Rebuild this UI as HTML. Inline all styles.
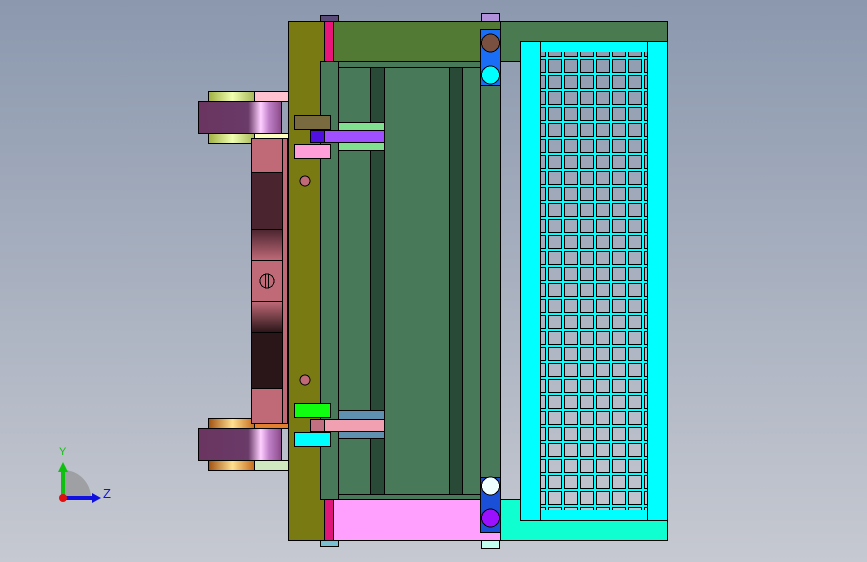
<!DOCTYPE html>
<html><head><meta charset="utf-8"><style>html,body{margin:0;padding:0;width:867px;height:562px;overflow:hidden}svg{display:block}</style></head><body>
<svg width="867" height="562" viewBox="0 0 867 562" xmlns="http://www.w3.org/2000/svg" shape-rendering="crispEdges">
<defs>
<linearGradient id="bg" gradientUnits="userSpaceOnUse" x1="0" y1="0" x2="0" y2="562"><stop offset="0" stop-color="#8b98ae"/><stop offset="1" stop-color="#c6c9d1"/></linearGradient>
<pattern id="grid" patternUnits="userSpaceOnUse" x="546" y="57" width="16" height="16">
<path d="M0 0h16v16h-16z M2 2v14h14v-14z" fill="#00ffff" fill-rule="evenodd"/>
<rect x="2.5" y="2.5" width="13" height="13" fill="none" stroke="#000" stroke-width="1"/>
</pattern>
<linearGradient id="cyl" x1="0" x2="1" y1="0" y2="0"><stop offset="0" stop-color="#6a3560"/><stop offset=".6" stop-color="#6a3a68"/><stop offset=".75" stop-color="#ffd0ff"/><stop offset=".85" stop-color="#c080c8"/><stop offset="1" stop-color="#8a4a88"/></linearGradient>
<linearGradient id="yg" x1="0" x2="1"><stop offset="0" stop-color="#a0b040"/><stop offset=".3" stop-color="#f0ffb0"/><stop offset=".6" stop-color="#a0b050"/><stop offset="1" stop-color="#c0d080"/></linearGradient>
<linearGradient id="og" x1="0" x2="1"><stop offset="0" stop-color="#a05010"/><stop offset=".3" stop-color="#ffe090"/><stop offset=".6" stop-color="#c06010"/><stop offset="1" stop-color="#d08030"/></linearGradient>
<linearGradient id="pk1" x1="0" x2="0" y1="0" y2="1"><stop offset="0" stop-color="#4a2530"/><stop offset="1" stop-color="#c06a78"/></linearGradient>
<linearGradient id="pk2" x1="0" x2="0" y1="0" y2="1"><stop offset="0" stop-color="#c06a78"/><stop offset="1" stop-color="#2a1518"/></linearGradient>
</defs>
<rect width="867" height="562" fill="url(#bg)"/>
<g stroke="#000" stroke-width="1">
<rect x="320.5" y="15.5" width="18" height="6" fill="#5a4a7a"/>
<rect x="481.5" y="13.5" width="18" height="8" fill="#b090d8"/>
<rect x="320.5" y="540.5" width="18" height="6" fill="#7ac0d0"/>
<rect x="481.5" y="540.5" width="18" height="8" fill="#c0fff0"/>
<rect x="500.5" y="21.5" width="167" height="40" fill="#4a7a50"/>
<rect x="500.5" y="499.5" width="167" height="41" fill="#10ffd0"/>
<rect x="520.5" y="41.5" width="147" height="479" fill="#00ffff"/>
<rect x="540" y="52" width="108" height="458" fill="url(#bg)" stroke="none"/>
<rect x="540" y="52" width="108" height="458" fill="url(#grid)" stroke="none"/>
<line x1="540.5" y1="41" x2="540.5" y2="521"/>
<line x1="647.5" y1="41" x2="647.5" y2="521"/>
<rect x="288.5" y="21.5" width="212" height="519" fill="#7a7a12"/>
<rect x="324.5" y="21.5" width="9" height="40" fill="#e8157a"/>
<rect x="333.5" y="21.5" width="167" height="40" fill="#527a35"/>
<rect x="324.5" y="499.5" width="9" height="41" fill="#e0157a"/>
<rect x="333.5" y="499.5" width="167" height="41" fill="#ffa0ff"/>
<rect x="320.5" y="61.5" width="180" height="438" fill="#487a5a"/>
<line x1="338.5" y1="62" x2="338.5" y2="499"/>
<rect x="338.5" y="67.5" width="142" height="427" fill="#487a5a"/>
<rect x="370.5" y="67.5" width="14" height="427" fill="#2a4a38"/>
<rect x="449.5" y="67.5" width="13" height="427" fill="#2a4a38"/>
<rect x="480.5" y="61.5" width="20" height="438" fill="#487a5a"/>
<rect x="480.5" y="29.5" width="20" height="56" fill="#1a6ef5"/>
<circle cx="490.5" cy="43" r="9" fill="#7a5040"/>
<circle cx="490.5" cy="75" r="9" fill="#00ffff"/>
<rect x="480.5" y="477.5" width="20" height="55" fill="#1a4fd8"/>
<circle cx="490.5" cy="486" r="9" fill="#f0ffff"/>
<circle cx="490.5" cy="518" r="9" fill="#9a10ff"/>
<rect x="338.5" y="122.5" width="46" height="28" fill="#80e090"/>
<rect x="294.5" y="115.5" width="36" height="14" fill="#7a6a40"/>
<rect x="310.5" y="130.5" width="74" height="12" fill="#a050ff"/>
<rect x="310.5" y="130.5" width="14" height="12" fill="#5010e0"/>
<rect x="294.5" y="144.5" width="36" height="14" fill="#ff9ed8"/>
<rect x="338.5" y="410.5" width="46" height="28" fill="#6090b0"/>
<rect x="294.5" y="403.5" width="36" height="14" fill="#10ff10"/>
<rect x="310.5" y="419.5" width="74" height="12" fill="#f0a0b0"/>
<rect x="310.5" y="419.5" width="14" height="12" fill="#c07080"/>
<rect x="294.5" y="432.5" width="36" height="14" fill="#00ffff"/>
<circle cx="305" cy="181" r="5" fill="#c06a78"/>
<circle cx="305" cy="380" r="5" fill="#c06a78"/>
<rect x="208.5" y="91.5" width="80" height="10" fill="url(#yg)"/>
<rect x="254.5" y="91.5" width="34" height="10" fill="#ffc0d0"/>
<rect x="198.5" y="101.5" width="83" height="32" fill="url(#cyl)"/>
<rect x="208.5" y="133.5" width="80" height="10" fill="url(#yg)"/>
<rect x="254.5" y="133.5" width="34" height="10" fill="#ffffc0"/>
<rect x="208.5" y="418.5" width="80" height="10" fill="url(#og)"/>
<rect x="254.5" y="418.5" width="34" height="10" fill="#e08030"/>
<rect x="198.5" y="428.5" width="83" height="32" fill="url(#cyl)"/>
<rect x="208.5" y="460.5" width="80" height="10" fill="url(#og)"/>
<rect x="254.5" y="460.5" width="34" height="10" fill="#d0e8c0"/>
<rect x="251.5" y="138.5" width="36" height="285" fill="#c06a78"/>
<rect x="251.5" y="172.5" width="31" height="57" fill="#4a2530"/>
<rect x="251.5" y="229.5" width="31" height="31" fill="url(#pk1)"/>
<rect x="251.5" y="301.5" width="31" height="31" fill="url(#pk2)"/>
<rect x="251.5" y="332.5" width="31" height="56" fill="#2a1518"/>
<line x1="282.5" y1="138" x2="282.5" y2="423"/>
<circle cx="267" cy="281" r="7" fill="#c06a78"/>
<line x1="265.5" y1="274" x2="265.5" y2="288"/><line x1="268.5" y1="274" x2="268.5" y2="288"/>
</g>
<g shape-rendering="auto">
<path d="M63 498 V470 A28 28 0 0 1 91 498 Z" fill="#888" opacity=".6"/>
<line x1="63" y1="498" x2="63" y2="470" stroke="#10c010" stroke-width="4"/>
<path d="M58 472 L63 462 L68 472 Z" fill="#10c010"/>
<line x1="63" y1="498" x2="92" y2="498" stroke="#1010e0" stroke-width="4"/>
<path d="M92 493 L101 498 L92 503 Z" fill="#1010e0"/>
<circle cx="63" cy="498" r="4" fill="#e01010"/>
<text x="59" y="455" font-family="Liberation Sans, sans-serif" font-size="11" fill="#10c010">Y</text>
<text x="103" y="498" font-family="Liberation Sans, sans-serif" font-size="13" fill="#1010e0">Z</text>
</g>
</svg>
</body></html>
